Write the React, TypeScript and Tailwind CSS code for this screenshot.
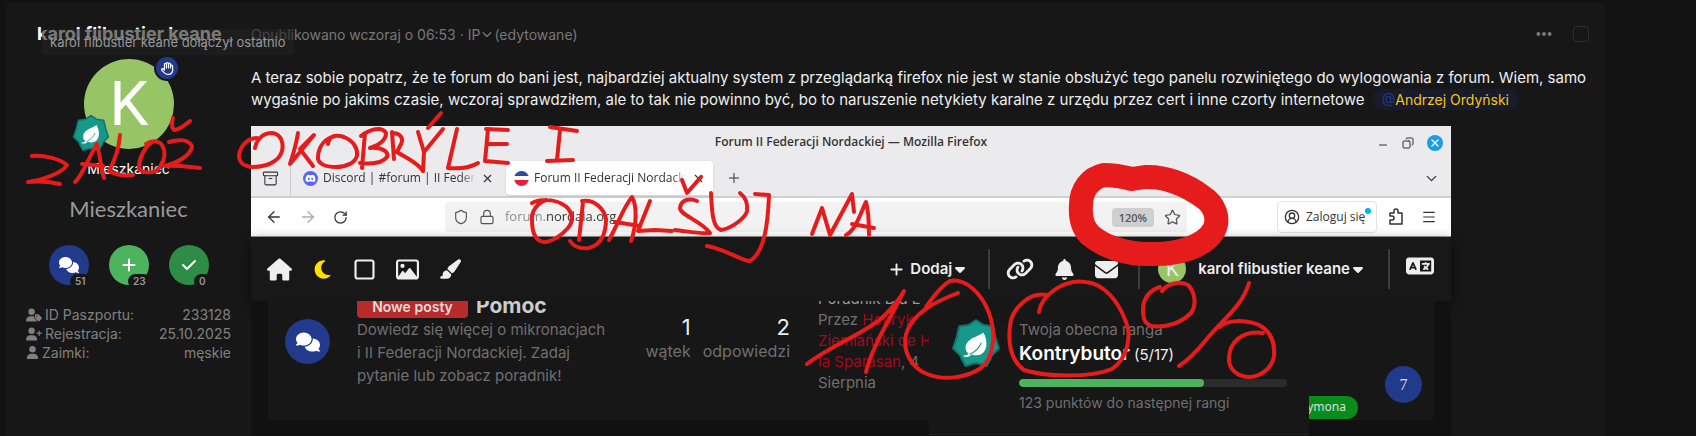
import type { ReactNode } from "react";
import {
  FaBell,
  FaCaretDown,
  FaCheck,
  FaChevronDown,
  FaComments,
  FaDiscord,
  FaEllipsis,
  FaEnvelope,
  FaHouse,
  FaLanguage,
  FaLink,
  FaMoon,
  FaPaintbrush,
  FaPlus,
  FaRegHand,
  FaRegImage,
  FaRegSquare,
  FaUser,
  FaUserPlus,
  FaUserTag,
} from "react-icons/fa6";
import {
  Archive,
  ArrowLeft,
  ArrowRight,
  ChevronDown,
  CircleUserRound,
  Copy,
  Lock,
  Menu,
  Minus,
  Plus,
  RotateCw,
  Shield,
  Star,
  X,
} from "lucide-react";

const strokes = [
  // załóż
  "M32 156 C45 155 60 159 67 165 C62 173 43 180 28 182 C38 181 50 182 60 184",
  "M75 182 C82 176 90 155 97 144 C100 155 101 168 104 178 M82 164 L103 166",
  "M120 135 C119 148 114 162 109 171 C116 175 125 176 133 175",
  "M146 144 C152 140 160 140 163 147 C167 156 162 166 156 171 C148 174 140 172 139 168 C139 158 144 148 152 142",
  "M169 142 C178 139 190 139 192 147 C190 156 177 163 165 166 C178 165 188 167 200 168",
  "M173 118 C171 123 172 130 175 130 C181 129 185 125 190 121",
  // okobryle i
  "M255 148 C257 138 264 133 272 133 C281 134 284 143 282 151 C279 162 266 167 252 167 C242 166 239 162 239 155 C241 145 248 138 257 138",
  "M298 133 C296 145 293 155 290 164 L314 135 L300 149 L313 166",
  "M328 144 C329 136 335 134 344 137 C354 141 358 149 357 156 C355 163 346 167 336 167 C324 167 317 163 318 156 C319 146 325 138 336 136",
  "M365 133 L362 168 M361 136 C370 129 382 126 386 133 C386 140 379 145 370 148 C381 147 389 151 387 157 C382 164 370 164 360 163",
  "M392 132 L394 159 M392 133 C400 133 405 138 400 146 L397 152 C406 158 417 162 423 171",
  "M418 132 L424 152 M443 129 L424 152 L423 171 M441 113 L428 128",
  "M457 129 L448 168 C460 169 470 168 478 163",
  "M486 129 L508 130 M488 129 L485 161 L508 163 M487 144 L507 144",
  "M550 127 L577 131 M560 130 L557 160 M547 161 L573 160",
  // odalsuj
  "M532 203 C540 199 554 199 562 204 C572 209 575 220 568 228 C562 235 552 242 544 242 C535 241 532 232 532 220 C531 212 537 203 546 200",
  "M583 202 L579 240 M582 201 C595 199 604 209 606 219 C606 235 600 245 589 248 C581 249 574 247 570 241",
  "M609 240 C618 224 624 206 632 197 C637 206 637 224 631 241 M615 222 L640 226",
  "M650 201 L638 231 L655 230 L672 231",
  "M697 201 C690 198 681 199 680 208 C680 215 703 222 710 233 C698 234 686 231 675 230",
  "M682 180 L687 193 L701 177",
  "M711 193 C712 210 712 227 721 230 C733 228 746 217 747 211 C748 203 745 197 740 193",
  "M755 194 L769 195 C768 222 765 252 750 261 C744 262 725 249 707 246",
  // na
  "M812 234 L822 208 L830 235 L852 194 L854 212",
  "M846 235 C856 230 860 214 866 202 C869 212 869 224 869 235 M852 224 L874 228",
  // 100%
  "M807 364 C835 343 868 332 884 316 C892 308 900 298 904 291 C894 312 872 346 866 372",
  "M926 307 C933 297 942 285 950 281 C966 278 982 294 989 313 C996 332 995 356 981 368 C966 378 944 381 927 374 C912 368 902 352 906 334 C913 312 937 301 958 293",
  "M1046 295 C1030 292 1015 307 1011 320 C1007 340 1010 360 1024 370 C1045 377 1090 378 1112 369 C1127 359 1132 336 1126 322 C1118 300 1103 283 1085 282 C1063 279 1041 296 1039 312",
  "M1162 291 C1167 284 1180 280 1188 285 C1195 292 1197 305 1191 313 C1182 322 1168 328 1152 326 C1143 324 1143 315 1143 308 C1144 297 1151 290 1160 287",
  "M1249 283 C1242 307 1222 320 1206 340 C1197 351 1187 361 1179 366",
  "M1220 327 C1227 319 1246 320 1259 325 C1272 332 1275 344 1274 356 C1272 369 1260 377 1248 377 C1235 376 1228 367 1229 357 C1230 343 1241 330 1263 333",
];

function Scribbles() {
  return (
    <svg
      className="pointer-events-none absolute top-0 left-0"
      width="1300"
      height="400"
      viewBox="0 0 1300 400"
      fill="none"
      stroke="#e61c1c"
      strokeWidth="4"
      strokeLinecap="round"
      strokeLinejoin="round"
      aria-hidden="true"
    >
      {strokes.map((d) => (
        <path key={d} d={d} />
      ))}
      <path
        strokeWidth="24"
        d="M1132 179 C1120 176 1110 175 1104 175 C1090 178 1081 190 1081 205 C1080 218 1083 228 1090 235 C1104 247 1126 254 1148 254 C1180 255 1205 246 1214 230 C1220 218 1214 204 1203 197 C1187 185 1165 176 1145 177 L1132 179"
      />
    </svg>
  );
}

function RankBadge({ className }: { className: string }) {
  return (
    <svg viewBox="0 0 48 48" className={className} aria-hidden="true">
      <path
        d="M24 2 L30 6 Q31 7 33 7 L40 8 L42 16 Q42 18 43 20 L46 29 L40 35 Q38 37 38 39 L34 46 L27 44 Q24 43 21 44 L14 46 L10 39 Q10 37 8 35 L2 29 L5 20 Q6 18 6 16 L8 8 L15 7 Q17 7 18 6 Z"
        fill="#16998a"
        stroke="#12756c"
        strokeWidth="2"
        strokeLinejoin="round"
      />
      <path
        d="M31 14 C27 18 15 19 14 28 C14 31 15 33 17 34 C15 36 14 36 12 36 V37 C16 38 18 37 20 35 C28 38 34 33 34 25 C34 21 33 17 31 14 Z"
        fill="#fff"
      />
      <path d="M18 35 C24 32 27 29 29 24" stroke="#16998a" strokeWidth="1" fill="none" />
    </svg>
  );
}

function ExtensionIcon() {
  return (
    <svg
      width="16"
      height="18"
      viewBox="0 0 16 18"
      fill="none"
      stroke="currentColor"
      strokeWidth="1.5"
      strokeLinejoin="round"
      aria-hidden="true"
    >
      <path d="M2 16 V12 H4 A2 2 0 0 0 4 8 H2 V5 H6 V3 A2 2 0 0 1 10 3 V5 H14 V16 Z" />
    </svg>
  );
}

function Stat({ icon, count, className }: { icon: ReactNode; count: number; className: string }) {
  return (
    <div className={`relative flex size-10 items-center justify-center rounded-full text-white ${className}`}>
      {icon}
      <span className="absolute -right-[2px] -bottom-1 rounded-full bg-[#171717] px-[5px] text-[10px] leading-[15px] font-semibold text-[#999]">
        {count}
      </span>
    </div>
  );
}

const details = [
  { icon: <FaUserTag size={16} />, label: "ID Paszportu:", value: "233128" },
  { icon: <FaUserPlus size={16} />, label: "Rejestracja:", value: "25.10.2025" },
  { icon: <FaUser size={13} />, label: "Zaimki:", value: "męskie" },
];

function Author() {
  return (
    <aside className="flex w-[245px] shrink-0 flex-col px-5">
      <div className="relative ml-[11px] pt-[19px]">
        <a href="#profil" className="block text-[18px] leading-6 font-bold whitespace-nowrap text-white">
          karol flibustier keane
        </a>
        <div
          role="tooltip"
          className="absolute top-[26px] left-[5px] z-10 h-[26px] rounded bg-[#222]/60 px-2 text-[13px] leading-[26px] whitespace-nowrap text-[#999]"
        >
          karol flibustier keane dołączył ostatnio
        </div>
      </div>
      <div className="relative mx-auto mt-[13px] mr-[57px] flex size-[90px] items-center justify-center rounded-full bg-[#97c566] font-['Roboto'] text-[62px] leading-none text-white">
        K
        <span className="absolute -top-1 -right-[6px] flex size-[26px] items-center justify-center rounded-full border-2 border-[#171717] bg-[#213a8b]">
          <FaRegHand size={13} />
        </span>
        <RankBadge className="absolute -bottom-[3px] -left-3 size-[38px]" />
      </div>
      <p className="mt-2 text-center text-[14px] leading-6 text-white">Mieszkaniec</p>
      <p className="mt-3 text-center font-['Lato'] text-[22px] leading-[32px] text-[#999]">Mieszkaniec</p>
      <div className="mt-5 flex justify-center gap-5">
        <Stat icon={<FaComments size={20} />} count={51} className="bg-[#213a8b]" />
        <Stat icon={<FaPlus size={16} />} count={23} className="bg-[#4db35e]" />
        <Stat icon={<FaCheck size={16} />} count={0} className="bg-[#2d8c45]" />
      </div>
      <dl className="mt-5 text-[14px] leading-[19px] text-[#808080]">
        {details.map((item) => (
          <div key={item.label} className="flex items-center">
            <dt className="flex items-center gap-[3px]">
              {item.icon} {item.label}
            </dt>
            <dd className="ml-auto">{item.value}</dd>
          </div>
        ))}
      </dl>
    </aside>
  );
}

function BrowserChrome() {
  return (
    <div className="font-['Open_Sans',sans-serif] text-[#333]">
      <div className="bg-[#ebebed]">
        <div className="relative flex h-[34px] items-center justify-end pr-2">
          <div className="absolute inset-x-0 bottom-2 text-center text-[12px] leading-5 font-semibold">
            Forum II Federacji Nordackiej — Mozilla Firefox
          </div>
          <div className="relative flex items-center gap-[13px]">
            <button aria-label="Minimalizuj" className="mt-1">
              <Minus size={12} strokeWidth={2} />
            </button>
            <button aria-label="Przywróć">
              <Copy size={12} className="-scale-x-100" />
            </button>
            <button aria-label="Zamknij" className="flex size-4 items-center justify-center rounded-full bg-[#1c9ee0] text-white">
              <X size={12} strokeWidth={2.5} />
            </button>
          </div>
        </div>
        <div className="flex h-[38px] items-center border-b-2 border-[#d0d0d3] text-[12px]">
          <button aria-label="Widok" className="flex h-full w-10 items-center justify-center border-r border-[#ccc]">
            <Archive size={17} strokeWidth={1.5} />
          </button>
          <div className="flex w-[215px] items-center gap-[5px] px-3">
            <FaDiscord size={15} className="shrink-0 rounded-full bg-[#5865f2] p-[2px] text-white" />
            <span className="w-[160px] overflow-hidden mask-r-from-90% whitespace-nowrap">Discord | #forum | II Federacji</span>
            <button aria-label="Zamknij kartę">
              <X size={13} />
            </button>
          </div>
          <div className="flex h-[34px] w-[207px] items-center gap-[5px] rounded bg-white px-2 shadow-sm">
            <span className="size-[15px] shrink-0 rounded-full bg-[linear-gradient(#2c4ba5_36%,#fff_36%,#fff_60%,#ed1c3a_60%)]" />
            <span className="w-[156px] overflow-hidden mask-r-from-90% whitespace-nowrap">Forum II Federacji Nordackiej</span>
            <button aria-label="Zamknij kartę">
              <X size={13} />
            </button>
          </div>
          <button aria-label="Nowa karta" className="ml-[13px]">
            <Plus size={16} strokeWidth={1.5} />
          </button>
          <button aria-label="Lista kart" className="mr-[11px] ml-auto">
            <ChevronDown size={17} strokeWidth={1.75} />
          </button>
        </div>
      </div>
      <div className="flex h-[39px] items-center border-b border-[#999] bg-white px-[14px]">
        <div className="flex w-[180px] items-center gap-4">
          <button aria-label="Wstecz">
            <ArrowLeft size={18} strokeWidth={1.75} />
          </button>
          <button aria-label="Dalej" className="text-[#aaa]">
            <ArrowRight size={18} strokeWidth={1.75} />
          </button>
          <button aria-label="Odśwież">
            <RotateCw size={15} strokeWidth={2} />
          </button>
        </div>
        <div className="flex h-[30px] w-[742px] items-center gap-[10px] rounded bg-[#f2f2f2] pr-[6px] pl-2 text-[#555]">
          <Shield size={16} strokeWidth={1.75} />
          <Lock size={16} strokeWidth={1.75} />
          <input
            aria-label="Adres"
            defaultValue="forum.nordaia.org"
            className="min-w-0 flex-1 bg-[linear-gradient(to_right,#888_40px,#333_40px)] bg-clip-text text-[13px] text-transparent outline-none"
          />
          <button className="h-[19px] rounded-sm bg-[#cfcfcf] px-[7px] text-[11px] leading-[19px] font-semibold">120%</button>
          <button aria-label="Dodaj zakładkę">
            <Star size={17} strokeWidth={1.75} />
          </button>
        </div>
        <div className="ml-auto flex items-center gap-[11px]">
          <button className="relative flex h-8 w-[100px] items-center gap-[6px] rounded border border-[#e3e3e3] pl-[6px] text-[12px]">
            <CircleUserRound size={16} />
            Zaloguj się
            <span className="absolute top-[6px] right-[5px] size-[6px] rounded-full bg-[#00b3f4]" />
          </button>
          <div className="flex items-center gap-[17px]">
            <button aria-label="Rozszerzenia">
              <ExtensionIcon />
            </button>
            <button aria-label="Menu">
              <Menu size={16} strokeWidth={1.75} />
            </button>
          </div>
        </div>
      </div>
    </div>
  );
}

function SiteNav() {
  return (
    <nav className="relative flex h-16 items-center bg-[#181818] pr-[17px] pl-4 text-[#eee] shadow-[0_4px_12px_#0008]">
      <div className="flex items-center gap-5">
        <a href="#start" aria-label="Start">
          <FaHouse size={25} />
        </a>
        <button aria-label="Motyw" className="text-[#ffe000]">
          <FaMoon size={21} />
        </button>
        <button aria-label="Układ">
          <FaRegSquare size={23} />
        </button>
        <button aria-label="Galeria">
          <FaRegImage size={23} />
        </button>
        <button aria-label="Wygląd">
          <FaPaintbrush size={22} />
        </button>
      </div>
      <button className="ml-auto flex items-center gap-[6px] text-[15px] font-semibold">
        <FaPlus size={15} />
        <span className="flex items-center">
          Dodaj <FaCaretDown size={16} />
        </span>
      </button>
      <div className="ml-5 flex h-10 items-center gap-5 border-l-2 border-[#3c3c3c] pl-4">
        <a href="#linki" aria-label="Linki">
          <FaLink size={28} />
        </a>
        <button aria-label="Powiadomienia">
          <FaBell size={21} />
        </button>
        <button aria-label="Wiadomości">
          <FaEnvelope size={23} />
        </button>
      </div>
      <div className="ml-5 flex h-10 items-center border-l-2 border-[#3c3c3c] pl-[18px]">
        <button className="flex items-center text-[15px] font-semibold">
          <span className="mr-3 flex size-7 items-center justify-center rounded-full bg-[#97c566] font-['Roboto'] text-[20px] font-normal">
            K
          </span>
          karol flibustier keane
          <FaCaretDown size={16} />
        </button>
      </div>
      <div className="ml-[22px] flex h-10 items-center border-l-2 border-[#3c3c3c] pb-[6px] pl-4">
        <button aria-label="Język">
          <FaLanguage size={28} />
        </button>
      </div>
    </nav>
  );
}

function RankMenu() {
  return (
    <div className="absolute top-0 right-[142px] flex h-[134px] w-[380px] gap-[18px] border-b border-[#222] bg-[#171717] pt-[17px] pr-[22px] pl-[22px]">
      <RankBadge className="size-[50px] shrink-0" />
      <div className="flex-1">
        <p className="text-[15px] leading-6 text-[#6f6f6f]">Twoja obecna ranga</p>
        <p className="text-[15px] leading-6 text-[#eee]">
          <strong className="text-[19px] font-semibold text-white">Kontrybutor</strong> (5/17)
        </p>
        <div
          role="progressbar"
          aria-label="Postęp rangi"
          aria-valuenow={69}
          className="mt-3 h-2 w-full overflow-hidden rounded-full bg-[#2b2b2b]"
        >
          <div className="h-full w-[69%] rounded-full bg-[#4db35e]" />
        </div>
        <p className="mt-1 text-[14px] leading-6 text-[#6f6f6f]">123 punktów do następnej rangi</p>
      </div>
    </div>
  );
}

function ForumRow() {
  return (
    <div className="relative h-[136px] overflow-hidden bg-[#111] px-[17px]">
      <div className="flex h-[119px] rounded-b bg-[#171717] pl-[17px] text-[#6f6f6f]">
        <div className="mt-[18px] flex size-[45px] shrink-0 items-center justify-center rounded-full bg-[#213a8b] text-white">
          <FaComments size={24} />
        </div>
        <div className="-mt-2 ml-[27px] w-[269px]">
          <h3 className="flex items-center gap-2">
            <span className="h-[25px] w-[111px] rounded bg-[#b92b2b] text-center text-[14px] leading-7 font-semibold text-[#ddd]">
              Nowe posty
            </span>
            <a href="#pomoc" className="text-[21px] leading-[25px] font-bold text-[#ccc]">
              Pomoc
            </a>
          </h3>
          <p className="text-[15px] leading-[23px] whitespace-nowrap">
            Dowiedz się więcej o mikronacjach
            <br />
            i II Federacji Nordackiej. Zadaj
            <br />
            pytanie lub zobacz poradnik!
          </p>
        </div>
        <div className="mt-3 flex w-[164px] justify-end gap-3 text-right text-[16px] leading-5">
          <p>
            <span className="block text-[22px] leading-7 text-[#eee]">1</span>
            wątek
          </p>
          <p>
            <span className="block text-[22px] leading-7 text-[#eee]">2</span>
            odpowiedzi
          </p>
        </div>
        <p className="-mt-[13px] ml-7 w-[130px] text-[15px] leading-[21px] whitespace-nowrap">
          <a href="#poradnik" className="text-[#999]">
            Poradnik Dla L
          </a>
          <br />
          Przez{" "}
          <a href="#henryk" className="text-[#a3081e]">
            Henryk
            <br />
            Ziemiański de H
            <br />
            la Sparasan
          </a>
          , 4
          <br />
          Sierpnia
        </p>
        <div className="mt-[65px] mr-[12px] ml-auto flex gap-[27px]">
          <a
            href="#szymona"
            className="mt-[30px] h-[23px] rounded-full bg-[#0a8c1a] px-3 font-['Noto_Sans',sans-serif] text-[12px] leading-[22px] text-[#ddd]"
          >
            Szymona
          </a>
          <span className="flex size-[37px] items-center justify-center rounded-full bg-[#213a8b] font-['Liberation_Serif',serif] text-[16px] text-[#ddd]">
            7
          </span>
        </div>
      </div>
      <RankMenu />
    </div>
  );
}

export default function App() {
  return (
    <div className="relative overflow-hidden bg-[#121212] pt-[3px] pr-[91px] pl-[6px] font-['Inter',sans-serif]">
      <article className="flex rounded-t bg-[#171717]">
        <Author />
        <div className="min-w-0 flex-1">
          <header className="mt-[19px] flex h-6 items-center pr-4 text-[14px] text-[#777]">
            <span>Opublikowano wczoraj o 06:53 · IP</span>
            <FaChevronDown size={10} className="mx-[2px]" />
            <span>(edytowane)</span>
            <button aria-label="Więcej" className="mr-5 ml-auto">
              <FaEllipsis size={18} />
            </button>
            <input
              type="checkbox"
              aria-label="Zaznacz wpis"
              className="size-4 appearance-none rounded-sm border border-[#2f2f2f]"
            />
          </header>
          <p className="mt-[21px] pr-2 text-[15px] leading-[22px] text-[#eee]">
            A teraz sobie popatrz, że te forum do bani jest, najbardziej aktualny system z przeglądarką firefox nie jest w
            stanie obsłużyć tego panelu rozwiniętego do wylogowania z forum. Wiem, samo wygaśnie po jakims czasie, wczoraj
            sprawdziłem, ale to tak nie powinno być, bo to naruszenie netykiety karalne z urzędu przez cert i inne czorty
            internetowe{" "}
            <a href="#andrzej" className="ml-[3px] rounded-full bg-[#181c2a] px-[10px] py-[2px] text-[14px] text-[#f5c518]">
              <span className="text-[#213a8b]">@</span>Andrzej Ordyński
            </a>
          </p>
          <div className="mt-[15px] w-full max-w-[1200px]">
            <BrowserChrome />
            <SiteNav />
            <ForumRow />
          </div>
        </div>
      </article>
      <Scribbles />
    </div>
  );
}
